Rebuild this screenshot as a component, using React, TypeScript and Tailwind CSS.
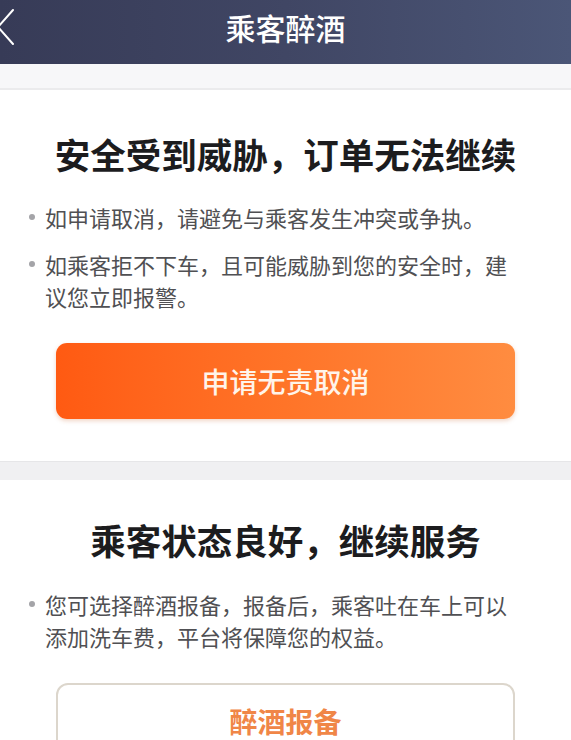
import React from "react";

const cjk = { fontFamily: '"Noto Sans CJK SC", "Noto Sans", sans-serif' };

function Bullet({ children }: { children: React.ReactNode }) {
  return (
    <div className="relative pl-[45px] pr-[52px] text-[22px] leading-[32px] text-[#505053]">
      <span className="absolute left-[29px] top-[13px] h-[6px] w-[6px] rounded-full bg-[#a4a4a8]" />
      {children}
    </div>
  );
}

export default function App() {
  return (
    <div className="w-[571px] h-[740px] overflow-hidden bg-[#f2f2f4]" style={cjk}>
      {/* Navigation bar */}
      <header className="relative flex h-16 items-center justify-center bg-gradient-to-r from-[#373b57] via-[#404664] to-[#4b5677] pb-[10px]">
        <svg
          className="absolute left-0 top-0"
          width="18"
          height="54"
          viewBox="0 0 18 54"
          fill="none"
        >
          <path d="M13 10 L-2 27 L13 44" stroke="#ffffff" strokeWidth="2" strokeLinecap="round" strokeLinejoin="round" />
        </svg>
        <h1 className="text-[30px] leading-[40px] font-medium text-white">乘客醉酒</h1>
      </header>

      {/* Thin gap under the bar */}
      <div className="h-[26px] border-b-2 border-[#ebebed] bg-[#f7f7f9]" />

      {/* Danger card */}
      <section className="bg-white pt-[42px] pb-[42px]">
        <h2 className="text-center text-[35.5px] font-bold leading-[44px] text-[#1c1c1e]">
          安全受到威胁，订单无法继续
        </h2>
        <div className="mt-[25px] flex flex-col gap-[15px]">
          <Bullet>如申请取消，请避免与乘客发生冲突或争执。</Bullet>
          <Bullet>如乘客拒不下车，且可能威胁到您的安全时，建议您立即报警。</Bullet>
        </div>
        <div className="mt-[31px] px-[56px]">
          <button className="flex h-[76px] w-full items-center justify-center rounded-[11px] bg-gradient-to-r from-[#ff5a12] via-[#ff7428] to-[#ff8c40] text-[28px] font-medium text-[#fff4ea] shadow-[0_2px_4px_rgba(200,90,30,0.25)]">
            申请无责取消
          </button>
        </div>
      </section>

      <div className="h-[19px] border-t border-[#e6e6e8] bg-[#f0f0f2]" />

      {/* Continue card */}
      <section className="bg-white pt-[38px] pb-[40px]">
        <h2 className="text-center text-[35.5px] font-bold leading-[44px] text-[#1c1c1e]">
          乘客状态良好，继续服务
        </h2>
        <div className="mt-[26px] flex flex-col">
          <Bullet>您可选择醉酒报备，报备后，乘客吐在车上可以添加洗车费，平台将保障您的权益。</Bullet>
        </div>
        <div className="mt-[31px] px-[56px]">
          <button className="flex h-[76px] w-full items-start justify-center rounded-[12px] border-2 border-[#dcd6cc] bg-white pt-[16px] text-[28px] leading-[40px] font-bold text-[#f08647]">
            醉酒报备
          </button>
        </div>
      </section>
    </div>
  );
}
